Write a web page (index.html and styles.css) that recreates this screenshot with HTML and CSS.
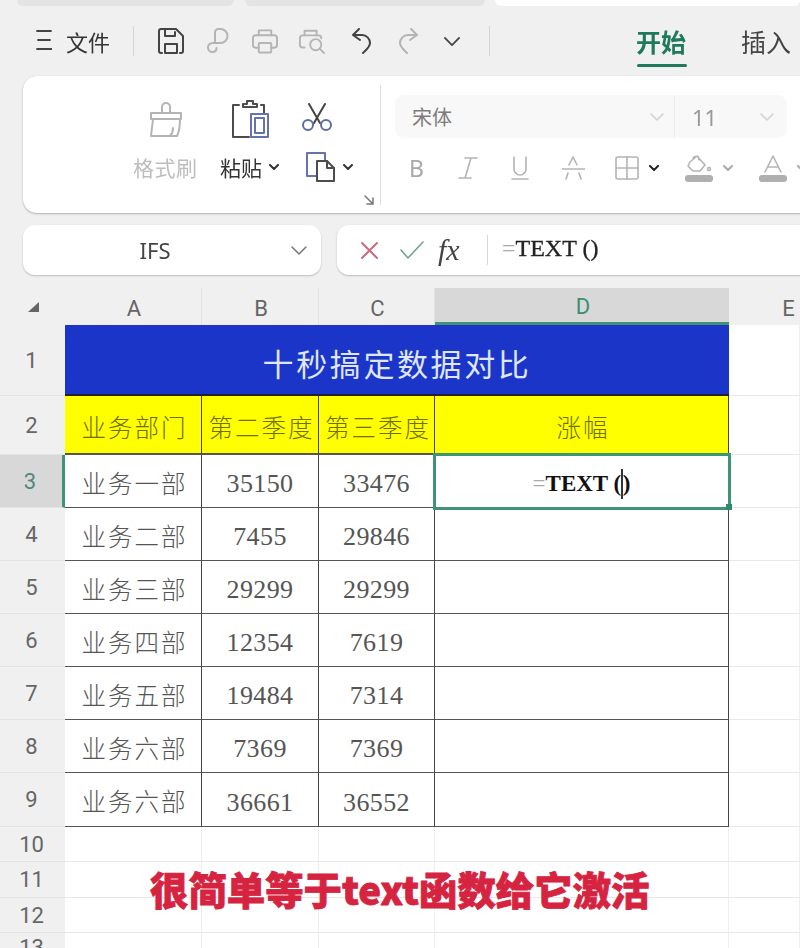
FILE: index.html
```html
<!DOCTYPE html>
<html lang="zh-CN">
<head>
<meta charset="utf-8">
<title>十秒搞定数据对比</title>
<link rel="stylesheet" href="styles.css">
</head>
<body>
<div class="app">
  <div class="tabs"><span class="tab t1"></span><span class="tab t2"></span><span class="tab t3"></span></div>

  <div class="toolbar">
    <svg class="burger" width="16" height="22" viewBox="0 0 16 22"><path d="M1 2h14M2 11h12M1 20h15"/></svg>
    <span class="file">文件</span>
    <i class="vsep s1"></i>
    <div class="quick">
      <svg class="qi dark" viewBox="0 0 26 26"><path d="M4 25H3a2 2 0 0 1-2-2V3a2 2 0 0 1 2-2h15l7 7v15a2 2 0 0 1-2 2h-1"/><path d="M7 2v6h10V4"/><rect x="7" y="16" width="12" height="9"/></svg>
      <svg class="qi pale" viewBox="0 0 26 26"><path d="M10 15V4.500a3.500 3.500 0 0 1 3.500-3.500h2a7 7 0 0 1 0 14h-8a4.500 4.500 0 0 0 0 9c3 0 4-2 4-4"/></svg>
      <svg class="qi pale" viewBox="0 0 27 26"><path d="M7 7V2h13v5"/><path d="M7 20H4a3 3 0 0 1-3-3v-7a3 3 0 0 1 3-3h19a3 3 0 0 1 3 3v7a3 3 0 0 1-3 3h-3"/><rect x="7" y="15" width="13" height="10" rx="1"/></svg>
      <svg class="qi pale" viewBox="0 0 28 26"><path d="M6 7V2h13v5"/><path d="M6 20H4a3 3 0 0 1-3-3v-7a3 3 0 0 1 3-3h17a3 3 0 0 1 3 3"/><circle cx="18" cy="17" r="6"/><path d="M22 21l5 5"/></svg>
      <svg class="qi dark undo" viewBox="0 0 24 26"><path d="M3 7l6-6M3 7l7 5M3 7h9a8 8 0 0 1 8 8c0 4-4 7-7 10"/></svg>
      <svg class="qi pale redo" viewBox="0 0 24 26"><path d="M21 7l-6-6M21 7l-7 5M21 7h-9a8 8 0 0 0-8 8c0 4 4 7 7 10"/></svg>
      <svg class="qi dark chev" viewBox="0 0 18 10"><path d="M1 1l8 8 8-8"/></svg>
    </div>
    <i class="vsep s2"></i>
    <div class="menu">
      <span class="menu-item active">开始</span>
      <span class="menu-item">插入</span>
    </div>
  </div>

  <div class="ribbon">
    <div class="clip">
      <div class="col c1">
        <svg class="big pale" width="36" height="38" viewBox="0 0 36 38"><path d="M14 13V7a4 4 0 0 1 8 0v6"/><path d="M3 13h30v6H3z"/><path d="M5 19L3 36h26c2-4 3-10 3-17"/><path d="M22 36c2-2 3-5 3-8"/></svg>
        <span class="lbl off">格式刷</span>
      </div>
      <div class="col c2">
        <svg class="big ink" width="38" height="38" viewBox="0 0 38 38"><path d="M8 5H2v32h16"/><path d="M30 5h3v8"/><path d="M12 7V4h4V1h6v3h4v3z"/><rect x="20" y="14" width="17" height="23" class="blue"/><rect x="24" y="18" width="9" height="15" class="blue"/></svg>
        <span class="lbl">粘贴<svg class="mini" viewBox="0 0 10 6"><path d="M1 1l4 4 4-4"/></svg></span>
      </div>
      <div class="col c3">
        <svg class="big blue-s" width="30" height="28" viewBox="0 0 30 28"><path d="M7 1l11 19M23 1L12 20" class="dk"/><circle cx="6" cy="22" r="5"/><circle cx="24" cy="22" r="5"/></svg>
        <span class="copy">
          <svg class="big ink" width="30" height="30" viewBox="0 0 30 30"><path d="M11 24H2V1h18v8" class="blue"/><path d="M12 9h10l7 7v13H12z"/><path d="M22 9v7h7"/></svg>
          <svg class="mini" viewBox="0 0 10 6"><path d="M1 1l4 4 4-4"/></svg>
        </span>
      </div>
      <svg class="expand" width="10" height="10" viewBox="0 0 10 10"><path d="M1 1l8 8M9 3v6H3"/></svg>
    </div>
    <div class="font">
      <div class="selects">
        <span class="sel-name">宋体<svg class="sc" viewBox="0 0 14 8"><path d="M1 1l6 6 6-6"/></svg></span>
        <span class="sel-size">11<svg class="sc" viewBox="0 0 14 8"><path d="M1 1l6 6 6-6"/></svg></span>
      </div>
      <div class="fmt">
        <span class="glyph b">B</span>
        <svg class="pale fi" width="20" height="24" viewBox="0 0 20 24"><path d="M7 2h12M13 2L7 22M1 22h12"/></svg>
        <svg class="pale fi" width="18" height="24" viewBox="0 0 18 24"><path d="M3 1v12a6 6 0 0 0 12 0V1M1 23h16"/></svg>
        <svg class="pale fi" width="23" height="24" viewBox="0 0 23 24"><path d="M7 9l4-8 4 8M0 13h23M6 17l-2 6M17 17l2 6"/></svg>
        <div class="fmt-tail">
          <span class="combo">
            <svg class="pale fi" width="24" height="24" viewBox="0 0 24 24"><rect x="1" y="1" width="22" height="22" rx="2"/><path d="M12 1v22M1 12h22"/></svg>
            <svg class="mini dk-mini" viewBox="0 0 10 6"><path d="M1 1l4 4 4-4"/></svg>
          </span>
          <span class="combo">
            <span class="swatch"><svg class="pale fi" width="24" height="18" viewBox="0 0 24 18"><path d="M3 7l7-6 8 9-5 6H6L1 11zM6 3c3-3 6-2 6 2"/><circle cx="22" cy="14" r="1.500"/></svg><i class="bar"></i></span>
            <svg class="mini" viewBox="0 0 10 6"><path d="M1 1l4 4 4-4"/></svg>
          </span>
          <span class="combo">
            <span class="swatch"><svg class="pale fi" width="18" height="18" viewBox="0 0 18 18"><path d="M1 17L9 1l8 16M4 12h10"/></svg><i class="bar"></i></span>
            <svg class="mini" viewBox="0 0 10 6"><path d="M1 1l4 4 4-4"/></svg>
          </span>
        </div>
      </div>
    </div>
  </div>

  <div class="formula-row">
    <div class="namebox"><span>IFS</span><svg class="nc" viewBox="0 0 16 9"><path d="M1 1l7 7 7-7"/></svg></div>
    <div class="fbox">
      <svg class="cross" width="19" height="19" viewBox="0 0 19 19"><path d="M2 2l15 15M17 2L2 17"/></svg>
      <svg class="check" width="24" height="18" viewBox="0 0 24 18"><path d="M1 9l7 8L23 1"/></svg>
      <span class="fx">fx</span>
      <i class="fsep"></i>
      <span class="ftext"><span class="eq">=</span>TEXT ()</span>
    </div>
  </div>

  <div class="sheet">
    <div class="corner"><i class="tri"></i></div>
    <div class="ch">A</div><div class="ch">B</div><div class="ch">C</div><div class="ch sel">D</div><div class="ch end">E</div>

    <div class="rh">1</div><div class="title">十秒搞定数据对比</div><div class="c"></div>
    <div class="rh">2</div><div class="hd">业务部门</div><div class="hd">第二季度</div><div class="hd">第三季度</div><div class="hd">涨幅</div><div class="c"></div>

    <div class="rh on">3</div><div class="td">业务一部</div><div class="td n">35150</div><div class="td n">33476</div>
    <div class="td active-cell"><span class="eq">=</span><b>TEXT (</b><i class="caret"></i><b>)</b><i class="handle"></i></div><div class="c"></div>
    <div class="rh">4</div><div class="td">业务二部</div><div class="td n">7455</div><div class="td n">29846</div><div class="td"></div><div class="c"></div>
    <div class="rh">5</div><div class="td">业务三部</div><div class="td n">29299</div><div class="td n">29299</div><div class="td"></div><div class="c"></div>
    <div class="rh">6</div><div class="td">业务四部</div><div class="td n">12354</div><div class="td n">7619</div><div class="td"></div><div class="c"></div>
    <div class="rh">7</div><div class="td">业务五部</div><div class="td n">19484</div><div class="td n">7314</div><div class="td"></div><div class="c"></div>
    <div class="rh">8</div><div class="td">业务六部</div><div class="td n">7369</div><div class="td n">7369</div><div class="td"></div><div class="c"></div>
    <div class="rh">9</div><div class="td">业务六部</div><div class="td n">36661</div><div class="td n">36552</div><div class="td"></div><div class="c"></div>

    <div class="rh">10</div><div class="c"></div><div class="c"></div><div class="c"></div><div class="c"></div><div class="c"></div>
    <div class="rh">11</div><div class="c"></div><div class="c"></div><div class="c"></div><div class="c"></div><div class="c"></div>
    <div class="rh">12</div><div class="c"></div><div class="c"></div><div class="c"></div><div class="c"></div><div class="c"></div>
    <div class="rh">13</div><div class="c"></div><div class="c"></div><div class="c"></div><div class="c"></div><div class="c"></div>

    <div class="caption">很简单等于text函数给它激活</div>
  </div>
</div>
</body>
</html>
```

FILE: styles.css
```css
* { box-sizing: border-box; }
html, body { margin: 0; padding: 0; background: #f0f0f0; }
body { width: 800px; height: 948px; overflow: hidden; font-family: "Noto Sans CJK SC", "Noto Sans", sans-serif; color: #333; }
.app { width: 800px; height: 948px; overflow: hidden; display: flex; flex-direction: column; filter: blur(0.45px); }
svg { display: block; flex: none; fill: none; stroke-width: 2; stroke-linejoin: round; stroke-linecap: round; }
i { display: block; font-style: normal; }

/* top */
.tabs { height: 6px; display: flex; flex: none; padding-left: 17px; }
.tab { display: block; height: 6px; border-radius: 0 0 8px 8px; background: #e4e4e4; }
.t1 { width: 217px; }
.t2 { width: 240px; margin-left: 11px; }
.t3 { width: 305px; margin-left: 10px; background: #fff; }

.toolbar { height: 70px; flex: none; display: flex; align-items: center; padding-left: 36px; }
.burger { stroke: #444; stroke-width: 1.800; margin-top: -2px; }
.file { font-size: 22px; line-height: 30px; margin-left: 14px; width: 44px; color: #333; white-space: nowrap; letter-spacing: 0; }
.vsep { width: 1px; height: 30px; background: #d4d4d4; }
.s1 { margin-left: 23px; }
.s2 { margin-left: 29px; }
.quick { display: flex; align-items: center; gap: 21px; margin-left: 24px; }
.qi { width: 26px; height: 26px; }
.undo { margin-left: 3px; }
.redo { margin-left: -1px; }
.dark { stroke: #444; }
.pale { stroke: #b4b4b4; }
.chev { width: 16px; height: 9px; margin-left: 2px; }
.menu { display: flex; gap: 55px; margin-left: 146px; }
.menu-item { font-size: 25px; line-height: 34px; color: #444; position: relative; white-space: nowrap; }
.menu-item.active { color: #1f7a5c; font-weight: 700; }
.menu-item.active::after { content: ""; position: absolute; left: 1px; right: -1px; bottom: -9px; height: 3px; border-radius: 2px; background: #1f7a5c; }

/* ribbon */
.ribbon { flex: none; height: 137px; width: 800px; margin-left: 23px; background: #fff; border-radius: 14px 0 0 14px; box-shadow: 0 1px 2px rgba(0,0,0,.25), 0 0 1px rgba(0,0,0,.15); display: flex; align-items: flex-start; }
.clip { position: relative; flex: none; width: 358px; height: 120px; margin-top: 9px; padding: 15px 0 0 110px; border-right: 1px solid #dcdcdc; display: flex; }
.col { display: flex; flex-direction: column; align-items: center; flex: none; }
.c1 { width: 66px; }
.c2 { width: 60px; margin-left: 21px; }
.c3 { width: 52px; margin-left: 22px; align-items: flex-start; }
.c3 .blue-s { margin-top: 3px; }
.big { height: 38px; }
.blue-s { stroke: #5d6ca8; height: 28px; }
.blue-s .dk { stroke: #444; }
.ink { stroke: #4c4c4c; }
.ink .blue { stroke: #6473ad; }
.lbl { font-size: 21px; line-height: 28px; margin-top: 15px; white-space: nowrap; display: flex; align-items: center; gap: 7px; color: #333; width: 100%; }
.lbl.off { color: #bdbdbd; letter-spacing: .5px; }
.mini { width: 10px; height: 6px; stroke: #333; stroke-width: 2; }
.copy { display: flex; align-items: center; gap: 8px; margin-top: 21px; margin-left: 3px; }
.copy .big { height: 30px; }
.expand { position: absolute; right: 6px; bottom: 0; stroke: #777; stroke-width: 1.500; }

.font { flex: none; margin-left: 14px; width: 420px; padding-top: 19px; }
.selects { width: 392px; height: 43px; display: flex; background: #f8f8f8; border-radius: 9px; color: #7c7c7c; font-size: 20px; }
.sel-name { width: 280px; padding: 0 10px 0 17px; display: flex; align-items: center; justify-content: space-between; border-right: 1px solid #ededed; }
.sel-size { flex: 1; padding: 0 13px 0 17px; display: flex; align-items: center; justify-content: space-between; font-size: 22px; color: #999; font-family: "Noto Sans", sans-serif; }
.sc { width: 14px; height: 8px; stroke: #d0d0d0; stroke-width: 1.500; }
.fmt { display: flex; align-items: center; gap: 33px; margin-top: 16px; padding-left: 14px; height: 28px; }
.glyph.b { width: 16px; font-family: "Noto Sans", sans-serif; font-size: 23px; line-height: 28px; color: #a8a8a8; }
.fi { stroke-width: 1.600; }
.fmt-tail { display: flex; align-items: center; gap: 26px; margin-left: -3px; }
.combo { display: flex; align-items: center; gap: 10px; }
.dk-mini { stroke: #222; }
.combo .mini { width: 10px; }
.swatch { display: flex; flex-direction: column; align-items: center; width: 28px; gap: 2px; }
.combo .mini:not(.dk-mini) { stroke: #aaa; }
.bar { width: 28px; height: 7px; border-radius: 3px; background: #b0b0b0; }

/* formula */
.formula-row { flex: none; height: 50px; margin-top: 12px; padding-left: 23px; display: flex; gap: 16px; }
.namebox, .fbox { background: #fff; border-radius: 12px; box-shadow: 0 1px 2px rgba(0,0,0,.22); display: flex; align-items: center; flex: none; }
.namebox { width: 298px; position: relative; justify-content: center; font-family: "Noto Sans", sans-serif; font-size: 22px; color: #444; padding-right: 34px; }
.nc { position: absolute; right: 14px; top: 21px; width: 16px; height: 9px; stroke: #777; stroke-width: 1.500; }
.fbox { width: 480px; padding-left: 23px; }
.cross { stroke: #cb6a7c; }
.check { stroke: #6ea48d; margin-left: 21px; stroke-width: 1.600; }
.fx { font-family: "Liberation Serif", serif; font-style: italic; font-size: 30px; line-height: 40px; margin-left: 14px; width: 28px; color: #444; }
.fsep { width: 1px; height: 30px; background: #d8d8d8; margin-left: 21px; }
.ftext { font-family: "Liberation Serif", serif; font-size: 24px; margin-left: 14px; color: #222; white-space: pre; margin-top: -4px; -webkit-text-stroke: .3px #222; }
.eq { color: #aaa; font-family: "Liberation Serif", serif; font-weight: 400; -webkit-text-stroke: 0; }

/* sheet */
.sheet { position: relative; flex: none; margin-top: 13px; display: grid; grid-template-columns: 65px 137px 117px 116px 294px 71px; grid-template-rows: 37px 71px 59px 53px 53px 53px 53px 53px 53px 54px 35px 36px 35px 30px; background: #fff; }
.corner, .ch, .rh { background: #f0f0f0; display: flex; align-items: center; justify-content: center; color: #666; font-family: Roboto, sans-serif; font-size: 22px; }
.ch { border-right: 1px solid #e2e2e2; padding: 3px 0 0 2px; }
.ch.sel { background: #d8d8d8; color: #3c8f74; border-right: 0; border-bottom: 3px solid #3f9478; }
.ch.end { border-right: 0; padding-left: 48px; }
.tri { width: 0; height: 0; border-style: solid; border-width: 0 0 10px 11px; border-color: transparent transparent #666 transparent; margin-left: 2px; }
.rh { border-bottom: 1px solid #e4e4e4; padding-right: 2px; }
.rh.on { background: #d8d8d8; color: #4f8a78; border-right: 3px solid #3f9478; }

.c { background: #fff; border-right: 1px solid #eeeeee; border-bottom: 1px solid #e8e8e8; }
.title { grid-column: span 4; background: #1b35c9; color: #dfe6ff; font-size: 31px; letter-spacing: 2.600px; font-weight: 400; text-align: center; line-height: 75px; height: 71px; overflow: hidden; border-bottom: 2px solid #222; }
.hd, .td { display: flex; align-items: center; justify-content: center; font-size: 24.500px; font-weight: 300; letter-spacing: 2px; white-space: nowrap; padding-left: 3px; }
.hd { background: #ffff00; color: #6f6f00; border-right: 1.500px solid #444; border-bottom: 2px solid #555; padding-top: 3px; }
.td { background: #fff; color: #555; border-right: 1.500px solid #444; border-bottom: 1.500px solid #555; padding-top: 2px; }
.td.n { font-family: "Liberation Serif", serif; font-size: 26px; letter-spacing: .4px; font-weight: 400; padding-top: 6px; padding-left: 0; }
.active-cell { position: relative; font-family: "Liberation Serif", serif; font-size: 23px; letter-spacing: 0; color: #111; font-weight: 400; outline: 3px solid #3f9478; outline-offset: -1px; border-color: transparent; padding-top: 5px; padding-left: 0; }
.active-cell b { font-weight: 700; white-space: pre; }
.caret { width: 1.500px; height: 30px; background: #333; }
.handle { position: absolute; right: -4px; bottom: -3px; width: 6px; height: 6px; background: #2f8a6a; }
.caption { position: absolute; left: 150px; top: 576px; font-size: 38.400px; line-height: 48px; font-weight: 900; color: #d6233f; white-space: nowrap; -webkit-text-stroke: .8px #d6233f; }
```
